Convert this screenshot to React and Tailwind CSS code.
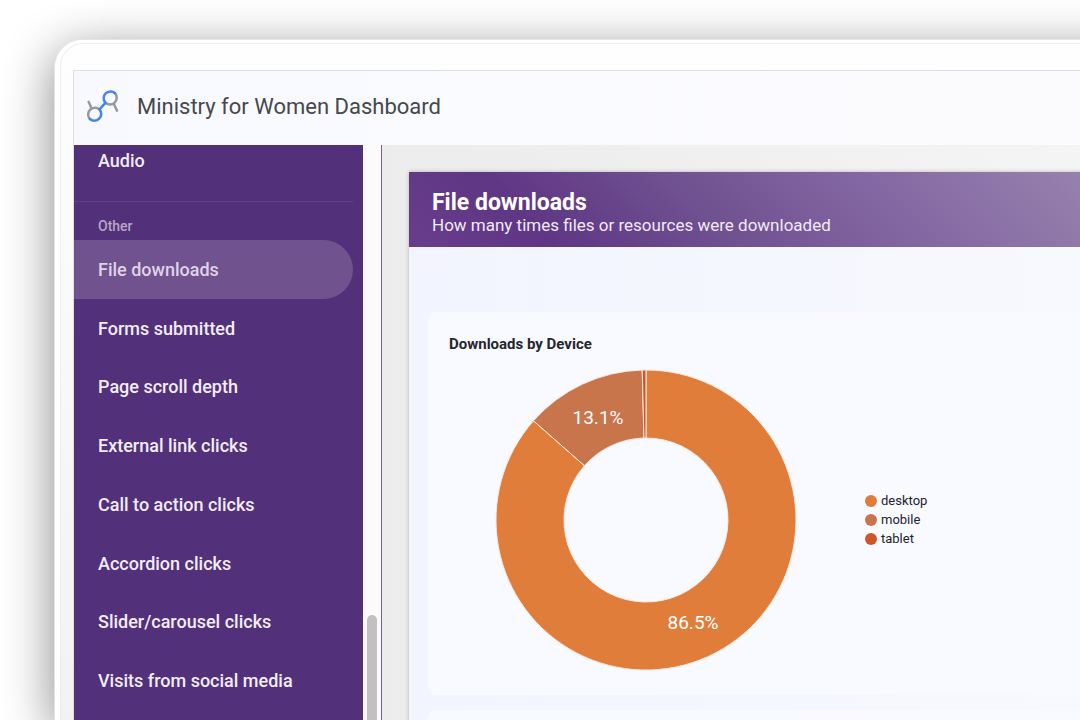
const NAV_ITEMS = [
  'File downloads',
  'Forms submitted',
  'Page scroll depth',
  'External link clicks',
  'Call to action clicks',
  'Accordion clicks',
  'Slider/carousel clicks',
  'Visits from social media',
];

const DEVICES = [
  { name: 'desktop', share: 86.5, fill: '#e17d3b', label: '86.5%', x: 198, y: 260 },
  { name: 'mobile', share: 13.1, fill: '#c9754c', label: '13.1%', x: 103, y: 55 },
  { name: 'tablet', share: 0.4, fill: '#cf5628' },
];

const CENTER = 151;
const OUTER = 150;
const INNER = 82;

function point(radius, percent) {
  const angle = (percent / 100) * 2 * Math.PI;
  return `${CENTER + radius * Math.sin(angle)} ${CENTER - radius * Math.cos(angle)}`;
}

function slicePath(start, end) {
  const large = end - start > 50 ? 1 : 0;
  return `M${point(OUTER, start)} A${OUTER} ${OUTER} 0 ${large} 1 ${point(OUTER, end)} L${point(INNER, end)} A${INNER} ${INNER} 0 ${large} 0 ${point(INNER, start)} Z`;
}

function Donut() {
  let total = 0;
  const slices = DEVICES.map((device) => {
    const start = total;
    total += device.share;
    return { ...device, d: slicePath(start, total) };
  });
  return (
    <svg width="302" height="302" viewBox="0 0 302 302" className="shrink-0" role="img" aria-label="Downloads by Device">
      {slices.map((slice) => (
        <path key={slice.name} d={slice.d} fill={slice.fill} stroke="#fbe9df" strokeWidth="1" />
      ))}
      {slices.filter((slice) => slice.label).map((slice) => (
        <text key={slice.name} x={slice.x} y={slice.y} textAnchor="middle" fill="#fff" className="text-[19px]">
          {slice.label}
        </text>
      ))}
    </svg>
  );
}

function Logo() {
  return (
    <svg width="32" height="32" viewBox="0 0 32 32" fill="none" strokeWidth="2.5" strokeLinecap="round" aria-hidden="true">
      <path d="M1.6 11.8 4.4 18M27 14.2l3 6.4" stroke="#97999c" />
      <path d="M2.9 29A6.8 6.8 0 0 1 12.5 19.4" stroke="#97999c" />
      <path d="M28 3.2A6.8 6.8 0 0 1 18.4 12.8" stroke="#97999c" />
      <path d="M12.5 19.4A6.8 6.8 0 0 1 2.9 29" stroke="#4483f2" />
      <path d="M18.4 12.8A6.8 6.8 0 0 1 28 3.2" stroke="#4483f2" />
      <path d="M12.5 19.4 18.4 12.8" stroke="#4483f2" />
    </svg>
  );
}

function Sidebar() {
  return (
    <nav className="w-[289px] shrink-0 bg-[#53307a] text-[18px] font-medium text-[#f1edf5]">
      <a href="#audio" className="block px-6 pt-1 leading-6">Audio</a>
      <div className="mr-[10px] mt-7 h-px bg-[#643f88]" />
      <h2 className="px-6 pt-4 text-[14px] leading-4 text-[#b7a6c8]">Other</h2>
      <ul className="mt-[6px] grid min-h-[470px] auto-rows-fr">
        {NAV_ITEMS.map((item, index) => (
          <li key={item} className="flex">
            <a
              href="#report"
              aria-current={index === 0 ? 'page' : undefined}
              className={
                index === 0
                  ? 'mr-[10px] flex flex-1 items-center rounded-r-full bg-[#70528f] px-6 text-[#ded4e7]'
                  : 'mr-[10px] flex flex-1 items-center px-6'
              }
            >
              {item}
            </a>
          </li>
        ))}
      </ul>
    </nav>
  );
}

function Report() {
  return (
    <main className="min-w-0 flex-1 border-l border-[#7a5c9a] bg-linear-to-r from-[#ececec] to-[#f5f5f5] pl-[27px] pt-[27px]">
      <article className="min-h-full bg-linear-to-r from-[#f2f5ff] to-[#f8f9fd] shadow-[0_0_4px_rgba(0,0,0,0.25)]">
        <header className="h-[75px] bg-[linear-gradient(45deg,#673d8c_0%,#5f3684_18%,#6f5090_40%,#8266a1_63%,#9781ae_92%)] px-[23px] pt-[18px] text-white">
          <h2 className="text-[23px] font-bold leading-[25px]">File downloads</h2>
          <p className="text-[17px] leading-5 text-[#f0eaf5]">How many times files or resources were downloaded</p>
        </header>
        <div className="flex flex-col gap-[15px] pl-[19px] pt-[65px]">
          <section className="rounded-l-lg bg-[#f9faff] px-[21px] pb-6 pt-[22px]">
            <h3 className="text-[15px] font-bold leading-5 text-[#26262c]">Downloads by Device</h3>
            <div className="mt-[15px] flex items-center gap-[68px] pl-[46px]">
              <Donut />
              <ul className="-mt-px text-[13px] leading-[19px] text-[#22222c]">
                {DEVICES.map((device) => (
                  <li key={device.name} className="flex items-center gap-1">
                    <span className="size-3 rounded-full" style={{ backgroundColor: device.fill }} />
                    {device.name}
                  </li>
                ))}
              </ul>
            </div>
          </section>
          <section className="h-40 rounded-tl-lg bg-[#f9faff]" />
        </div>
      </article>
    </main>
  );
}

export default function App() {
  return (
    <div className="flex h-screen overflow-hidden bg-white pl-[54px] pt-[39px] font-[Roboto,'Liberation_Sans',sans-serif]">
      <div className="-mr-16 min-w-0 flex-1 rounded-tl-[28px] border-l border-t border-[#e4e4e4] bg-white pl-[5px] pt-[3px] shadow-[0_12px_50px_rgba(0,0,0,0.48)]">
        <div className="h-full rounded-tl-[23px] border-l border-t border-[#ededed] bg-linear-to-b from-[#fefefe] to-[#f2f2f2] pl-3 pt-[26px]">
          <div className="flex h-full flex-col border-l border-t border-[#dfdfe2]">
            <header className="flex h-[74px] shrink-0 items-center gap-[18px] bg-linear-to-r from-[#f8f9ff] to-[#fcfcfe] pb-1 pl-[13px]">
              <Logo />
              <h1 className="text-[22px] text-[#46484c]">Ministry for Women Dashboard</h1>
            </header>
            <div className="flex min-h-0 flex-1">
              <Sidebar />
              <div className="flex w-[18px] shrink-0 justify-center bg-[#fbfbfb] pt-[470px]">
                <div className="w-[10px] rounded-t-full bg-[#c1c1c1]" />
              </div>
              <Report />
            </div>
          </div>
        </div>
      </div>
    </div>
  );
}
